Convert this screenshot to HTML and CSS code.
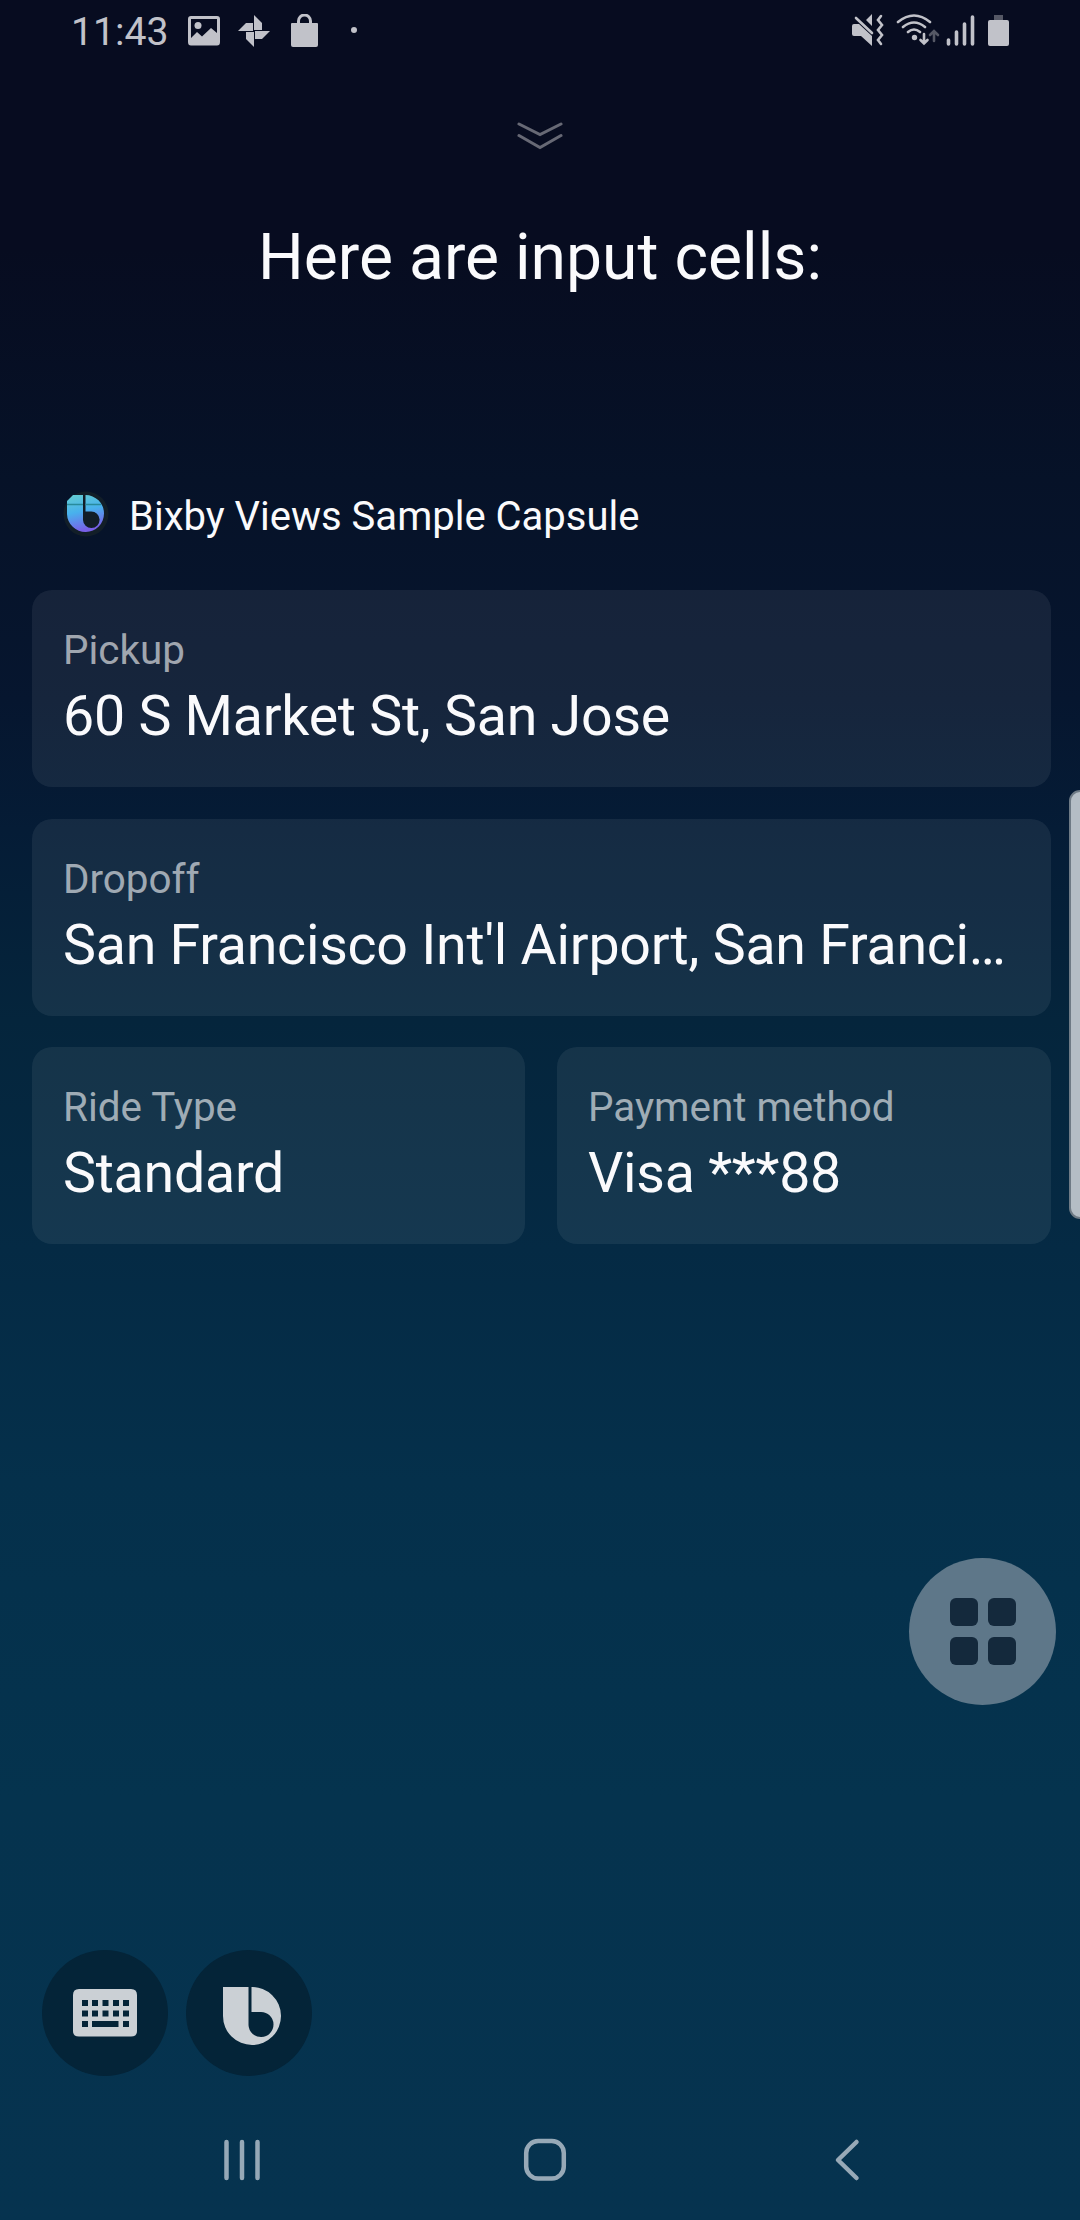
FILE: index.html
```
<!DOCTYPE html>
<html lang="en">
<head>
<meta charset="utf-8">
<title>Bixby Views</title>
<link rel="stylesheet" href="styles.css">
</head>
<body>
<div class="screen">
  <header class="status">
    <div class="status-left">
      <span class="clock">11:43</span>
      <svg class="i-photo" width="32" height="30" viewBox="0 0 32 30"><path fill-rule="evenodd" d="M3 0H29Q32 0 32 3V26Q32 29.500 29 29.500H3Q0 29.500 0 26V3Q0 0 3 0ZM3 3V22L9 16L14 20.500L23 12L29 17V3Z"/><circle cx="10" cy="9.500" r="3.500"/></svg>
      <svg class="i-pin" width="32" height="32" viewBox="0 0 32 32"><path d="M16 0L24 8V15H16ZM32 16L24 24H17V16ZM16 32L8 24V17H16ZM0 16L8 8H15V16Z"/></svg>
      <svg class="i-bag" width="27" height="34" viewBox="0 0 27 34"><path d="M1 9H26Q27 9 27 10V31Q27 33 25 33H2Q0 33 0 31V10Q0 9 1 9Z"/><path class="bag-handle" d="M7.500 10V7A6 6 0 0 1 19.500 7V10"/></svg>
      <i class="more"></i>
    </div>
    <svg class="status-right" width="160" height="34" viewBox="0 0 160 34">
      <path d="M0 12Q0 10 2 10H7L20 22V32L9 22H2Q0 22 0 20ZM14 6L20 0V12Z"/>
      <path class="line" d="M4 4L20 19" />
      <path class="line zig" d="M29 2L26 6L30 11L26 16L30 21L26 26L29 30"/>
      <g class="line"><path d="M46 8Q62-5 78 8M51 13Q62 4 73 13M56 18Q62 13 68 18"/></g>
      <circle cx="62.500" cy="23.500" r="2.700"/>
      <path class="line arrow" d="M72 20V29M68.500 26L72 29.500L75.500 26"/>
      <path class="line arrow dim" d="M82 27V18M78 21L82 17L86 21"/>
      <path class="line bars" d="M96.500 26V30M104.500 18V30M112.500 10V30M120.500 3V30"/>
      <path class="dim-fill" d="M142 1H151V6H142Z"/>
      <rect x="136" y="6" width="21" height="26" rx="2"/>
    </svg>
  </header>

  <svg class="collapse" width="46" height="28" viewBox="0 0 46 28"><path d="M2 2L23 12.500L44 2M2 13.500L23 25.500L44 13.500"/></svg>
  <h1 class="title">Here are input cells:</h1>

  <div class="capsule">
    <svg width="46" height="46" viewBox="0 0 46 46">
      <defs><linearGradient id="brand" x1="0" y1="0" x2=".25" y2="1"><stop offset="0" stop-color="#64cdd0"/><stop offset=".5" stop-color="#48b1ed"/><stop offset="1" stop-color="#7860e8"/></linearGradient></defs>
      <circle cx="23" cy="23" r="22.500" fill="#121e28"/>
      <path fill="url(#brand)" d="M10 4H20V29A8.300 8.300 0 1 0 28 20.500H22.500V4A18.500 18.500 0 1 1 4 23V10Z"/>
      <path d="M4 13.500H20M22.500 13.500H38" stroke="#298b9c" stroke-width="1.300"/>
    </svg>
    <span>Bixby Views Sample Capsule</span>
  </div>

  <main class="cells">
    <section class="cell wide"><div class="label">Pickup</div><div class="value">60 S Market St, San Jose</div></section>
    <section class="cell wide"><div class="label">Dropoff</div><div class="value">San Francisco Int'l Airport, San Franci…</div></section>
    <section class="cell"><div class="label">Ride Type</div><div class="value">Standard</div></section>
    <section class="cell"><div class="label">Payment method</div><div class="value">Visa ***88</div></section>
  </main>

  <div class="actions">
    <button class="round"><svg width="64" height="48" viewBox="0 0 64 48"><path fill-rule="evenodd" d="M6 0H58Q64 0 64 6V42Q64 47.500 58 47.500H6Q0 47.500 0 42V6Q0 0 6 0ZM9 11V17H15V11ZM19 11V17H25V11ZM29.500 11V17H35.500V11ZM40 11V17H46V11ZM50 11V17H56V11ZM9 21.500V27.500H15V21.500ZM19 21.500V27.500H25V21.500ZM29.500 21.500V27.500H35.500V21.500ZM40 21.500V27.500H46V21.500ZM50 21.500V27.500H56V21.500ZM9 32V38H15V32ZM19 32V38H45.500V32ZM50 32V38H56V32Z"/></svg></button>
    <button class="round logo"><svg width="58" height="58" viewBox="0 0 58 58"><path d="M0 0H25.500V38A12.500 12.500 0 1 0 38 25H28.500V0A29 29 0 1 1 0 29Z"/></svg></button>
  </div>

  <nav class="nav">
    <svg width="36" height="44" viewBox="0 0 36 44"><path d="M4 4V40M19.500 4V40M35 4V40" transform="translate(-1.500 0)"/></svg>
    <svg class="home" width="44" height="44" viewBox="0 0 44 44"><rect x="3.200" y="3" width="37.600" height="37.500" rx="12"/></svg>
    <svg width="26" height="44" viewBox="0 0 26 44"><path d="M22.500 4L4 22L22.500 40"/></svg>
  </nav>

  <div class="edge-handle"></div>
  <div class="float"><i></i><i></i><i></i><i></i></div>
</div>
</body>
</html>
```
FILE: styles.css
```
* { box-sizing: border-box; }
body { margin: 0; }
.screen {
  position: relative;
  width: 1080px;
  height: 2220px;
  overflow: hidden;
  display: flex;
  flex-direction: column;
  font-family: Roboto, sans-serif;
  color: #fafafc;
  background: linear-gradient(#070c20 0, #070c20 250px, #061228 480px, #06162f 700px, #051c36 830px, #05253c 1020px, #052a44 1250px, #05304b 1480px, #05334e 1800px, #06334f 2220px);
}
.status { height: 64px; display: flex; justify-content: space-between; padding: 0 70px 0 71px; fill: #c1c2c9; color: #c1c2c9; }
.status-left { display: flex; align-items: flex-start; }
.clock { width: 117px; font-size: 39.2px; line-height: 65px; }
.i-photo { margin-top: 16px; }
.i-pin { margin: 15px 0 0 18px; }
.i-bag { margin: 14px 0 0 21px; }
.bag-handle { fill: none; stroke: #c1c2c9; stroke-width: 3; }
.more { width: 6px; height: 6px; border-radius: 50%; background: #c1c2c9; margin: 27px 0 0 33px; }
.status-right { margin: 14px -2px 0 0; }
.line { fill: none; stroke: #c1c2c9; stroke-width: 2.6; stroke-linecap: round; }
.bars { stroke-width: 3.6; }
.dim { stroke: #555865; }
.dim-fill { fill: #555865; }
.collapse { align-self: center; margin-top: 58px; fill: none; stroke: #676975; stroke-width: 3; stroke-linecap: round; }
.title { margin: 66px 0 0; height: 82px; line-height: 82px; font-size: 64.2px; font-weight: 400; text-align: center; }
.capsule { display: flex; align-items: center; gap: 20px; height: 46px; margin: 193px 0 0 63px; font-size: 40px; }
.capsule span { padding-top: 4px; }
.cells { display: grid; grid-template-columns: 493px 494px; gap: 31.5px 32px; margin: 53px 0 0 32px; width: 1019px; }
.cell { height: 197px; min-width: 0; padding: 37px 31px; border-radius: 20px; background: rgba(255, 255, 255, .065); }
.wide { grid-column: span 2; }
.label { font-size: 40.4px; line-height: 47px; color: rgba(255, 255, 255, .6); }
.value { margin-top: 10px; font-size: 55.5px; letter-spacing: -.25px; line-height: 66px; white-space: nowrap; }
.actions { display: flex; gap: 18px; margin: 706px 0 0 42px; }
.round { width: 126px; height: 126px; padding: 0; border: 0; border-radius: 50%; background: #042438; fill: #cbd0d5; display: flex; align-items: center; justify-content: center; }
.logo svg { margin: 6px 0 0 5px; }
.nav { display: flex; justify-content: space-between; margin: 62px 220px 0 224px; fill: none; stroke: #97a9b7; stroke-width: 4.5; stroke-linecap: round; stroke-linejoin: round; }
.home { margin-right: 5px; }
.edge-handle { position: absolute; left: 1069px; top: 790px; width: 22px; height: 429px; border: 2px solid #6e7a85; border-radius: 16px; background: #b4bdc5; }
.float { position: absolute; left: 909px; top: 1558px; width: 147px; height: 147px; border-radius: 50%; background: #5e7789; display: grid; grid-template-columns: 28px 28px; grid-template-rows: 28px 28px; gap: 11px 10px; place-content: center; }
.float i { border-radius: 6px; background: #14293c; }
```
